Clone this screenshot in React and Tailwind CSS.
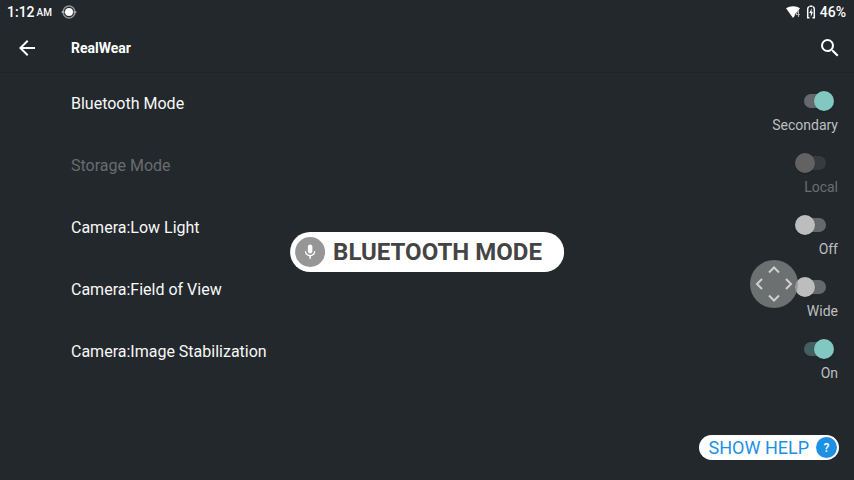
import React, { useState } from "react";

const SETTINGS = [
  { id: "bluetooth", label: "Bluetooth Mode", on: true, values: ["Primary", "Secondary"], track: "bg-[#66696b]" },
  { id: "storage", label: "Storage Mode", on: false, values: ["Local", "Portable"], disabled: true },
  { id: "low-light", label: "Camera:Low Light", on: false, values: ["Off", "On"] },
  { id: "fov", label: "Camera:Field of View", on: false, values: ["Wide", "Narrow"] },
  { id: "stabilization", label: "Camera:Image Stabilization", on: true, values: ["Off", "On"], track: "bg-[#43605f]" },
];

function Switch({ id, checked, disabled, track, onChange }) {
  let trackColor = checked ? track || "bg-[#43605f]" : "bg-[#66696b]";
  let thumbColor = checked ? "right-0 bg-[#80c8c1]" : "left-0 bg-[#bdbdbd]";
  if (disabled) {
    trackColor = "bg-[#363b3f]";
    thumbColor = "left-0 bg-[#626262]";
  }
  return (
    <span className="relative mr-1 block h-5 w-[39px]">
      <span className={`absolute left-[9px] top-[3px] h-3.5 w-[22px] rounded-full ${trackColor}`} />
      <span className={`absolute top-0 h-5 w-5 rounded-full shadow-sm ${thumbColor}`} />
      <input
        id={id}
        type="checkbox"
        role="switch"
        checked={checked}
        disabled={disabled}
        onChange={onChange}
        className="absolute inset-0 h-full w-full opacity-0"
      />
    </span>
  );
}

function SettingRow({ setting }) {
  const [on, setOn] = useState(setting.on);
  const { id, label, values, disabled, track } = setting;
  return (
    <li className="flex h-[62px] items-center justify-between">
      <label htmlFor={id} className={`text-base ${disabled ? "text-[#696c6e]" : "text-[#f8f8f8]"}`}>
        {label}
      </label>
      <div className="flex flex-col items-end gap-1 self-end">
        <Switch id={id} checked={on} disabled={disabled} track={track} onChange={() => setOn(!on)} />
        <span className={`text-sm leading-5 ${disabled ? "text-[#6a6e70]" : "text-[#bdbfc0]"}`}>
          {values[on ? 1 : 0]}
        </span>
      </div>
    </li>
  );
}

function StatusBar() {
  return (
    <div className="flex h-6 items-center justify-between pl-[7px] pr-2 text-sm font-medium">
      <div className="flex items-center">
        <span>1:12</span>
        <span className="ml-0.5 pt-0.5 text-[10px]">AM</span>
        <svg viewBox="0 0 16 16" className="ml-2 h-4 w-[18px]" fill="none">
          <circle cx="8" cy="8" r="5.9" stroke="#8f9294" strokeWidth="1.5" />
          <circle cx="8" cy="8" r="4" fill="#fff" />
          <path d="M0 8.800 2.100 6.200 4.200 8.800zM11.800 7.400l2.100 2.400 2.100-2.400z" fill="#b5b7b8" />
        </svg>
      </div>
      <div className="flex items-center">
        <svg viewBox="0 0 16 14" className="h-3.5 w-[17px]">
          <path d="M.5 3.300C4.500.4 11 .4 14.500 3.300L12.800 5.400 9.200 9.400V11L7.500 13z" fill="#fff" />
          <path d="M13 5 10.500 9.600H14.500M13 5V12" fill="none" stroke="#b5b7b8" strokeWidth="1" />
        </svg>
        <svg viewBox="0 0 10 14" className="ml-1 h-3.5 w-2.5" fill="none">
          <path d="M3.500 1.300H6.500M3.200 1.800C1.800 2 1.700 2.800 1.700 4V12.800H3.500M6.800 1.800C8.200 2 8.300 2.800 8.300 4V12.800H6.500" stroke="#fff" strokeWidth="1.500" />
          <path d="M6 3 3.200 8H4.800V12L7 6.800H5.400z" fill="#fff" />
        </svg>
        <span className="ml-1">46%</span>
      </div>
    </div>
  );
}

export default function App() {
  return (
    <div className="relative flex min-h-screen flex-col bg-[#23282c] font-['Roboto',sans-serif] text-white">
      <StatusBar />
      <header className="flex h-[49px] items-center border-b border-[#1f2427] pl-[15px] pr-3">
        <button type="button" aria-label="Back" className="h-6 w-6">
          <svg viewBox="0 0 24 24" className="h-6 w-6" fill="#fff">
            <path d="M20 11H7.83l5.59-5.59L12 4l-8 8 8 8 1.41-1.41L7.83 13H20z" />
          </svg>
        </button>
        <h1 className="ml-8 flex-1 text-sm font-bold">RealWear</h1>
        <button type="button" aria-label="Search" className="h-6 w-6">
          <svg viewBox="0 0 24 24" className="h-6 w-6" fill="#fff">
            <path d="M15.5 14h-.79l-.28-.27A6.47 6.47 0 0 0 16 9.5 6.5 6.5 0 1 0 9.5 16c1.61 0 3.09-.59 4.23-1.57l.27.28v.79l5 4.99L20.49 19zM9.5 14a4.5 4.5 0 1 1 0-9 4.5 4.5 0 0 1 0 9z" />
          </svg>
        </button>
      </header>

      <main className="flex-1">
        <ul className="pl-[71px] pr-4">
          {SETTINGS.map((setting) => (
            <SettingRow key={setting.id} setting={setting} />
          ))}
        </ul>
      </main>

      <footer className="flex justify-end pb-5 pr-[15px]">
        <button type="button" className="flex h-[25px] items-center gap-[7px] rounded-full bg-white pl-2.5 pr-0.5 text-lg leading-6 text-[#1e90e4]">
          SHOW HELP
          <span className="flex h-[21px] w-[21px] items-center justify-center rounded-full bg-[#1e90e4] text-xs font-medium text-white">?</span>
        </button>
      </footer>

      <div className="absolute left-1/2 top-[232px] flex h-10 -translate-x-1/2 items-center gap-2 whitespace-nowrap rounded-full bg-white pl-[5px] pr-[22px] text-2xl font-bold leading-10 text-[#444444]">
        <span className="flex h-[30px] w-[30px] items-center justify-center rounded-full bg-[#969696]">
          <svg viewBox="0 0 24 24" className="h-[18px] w-[18px]" fill="#fff">
            <path d="M12 14c1.66 0 3-1.34 3-3V5c0-1.66-1.34-3-3-3S9 3.340 9 5v6c0 1.660 1.340 3 3 3zm5.300-3c0 3-2.540 5.100-5.300 5.100S6.700 14 6.700 11H5c0 3.410 2.720 6.230 6 6.720V21h2v-3.280c3.280-.48 6-3.300 6-6.720z" />
          </svg>
        </span>
        BLUETOOTH MODE
      </div>

      <button type="button" aria-label="Move" className="absolute right-14 top-[260px] h-12 w-12 rounded-full bg-[#8c8e8f]/70">
        <svg viewBox="0 0 48 48" className="h-12 w-12" fill="none" stroke="#cfd0d1" strokeWidth="2">
          <path d="M19 12.500 24 7.500l5 5M19 35.500l5 5 5-5M12 19l-5 5 5 5M36 19l5 5-5 5" />
        </svg>
      </button>
    </div>
  );
}
